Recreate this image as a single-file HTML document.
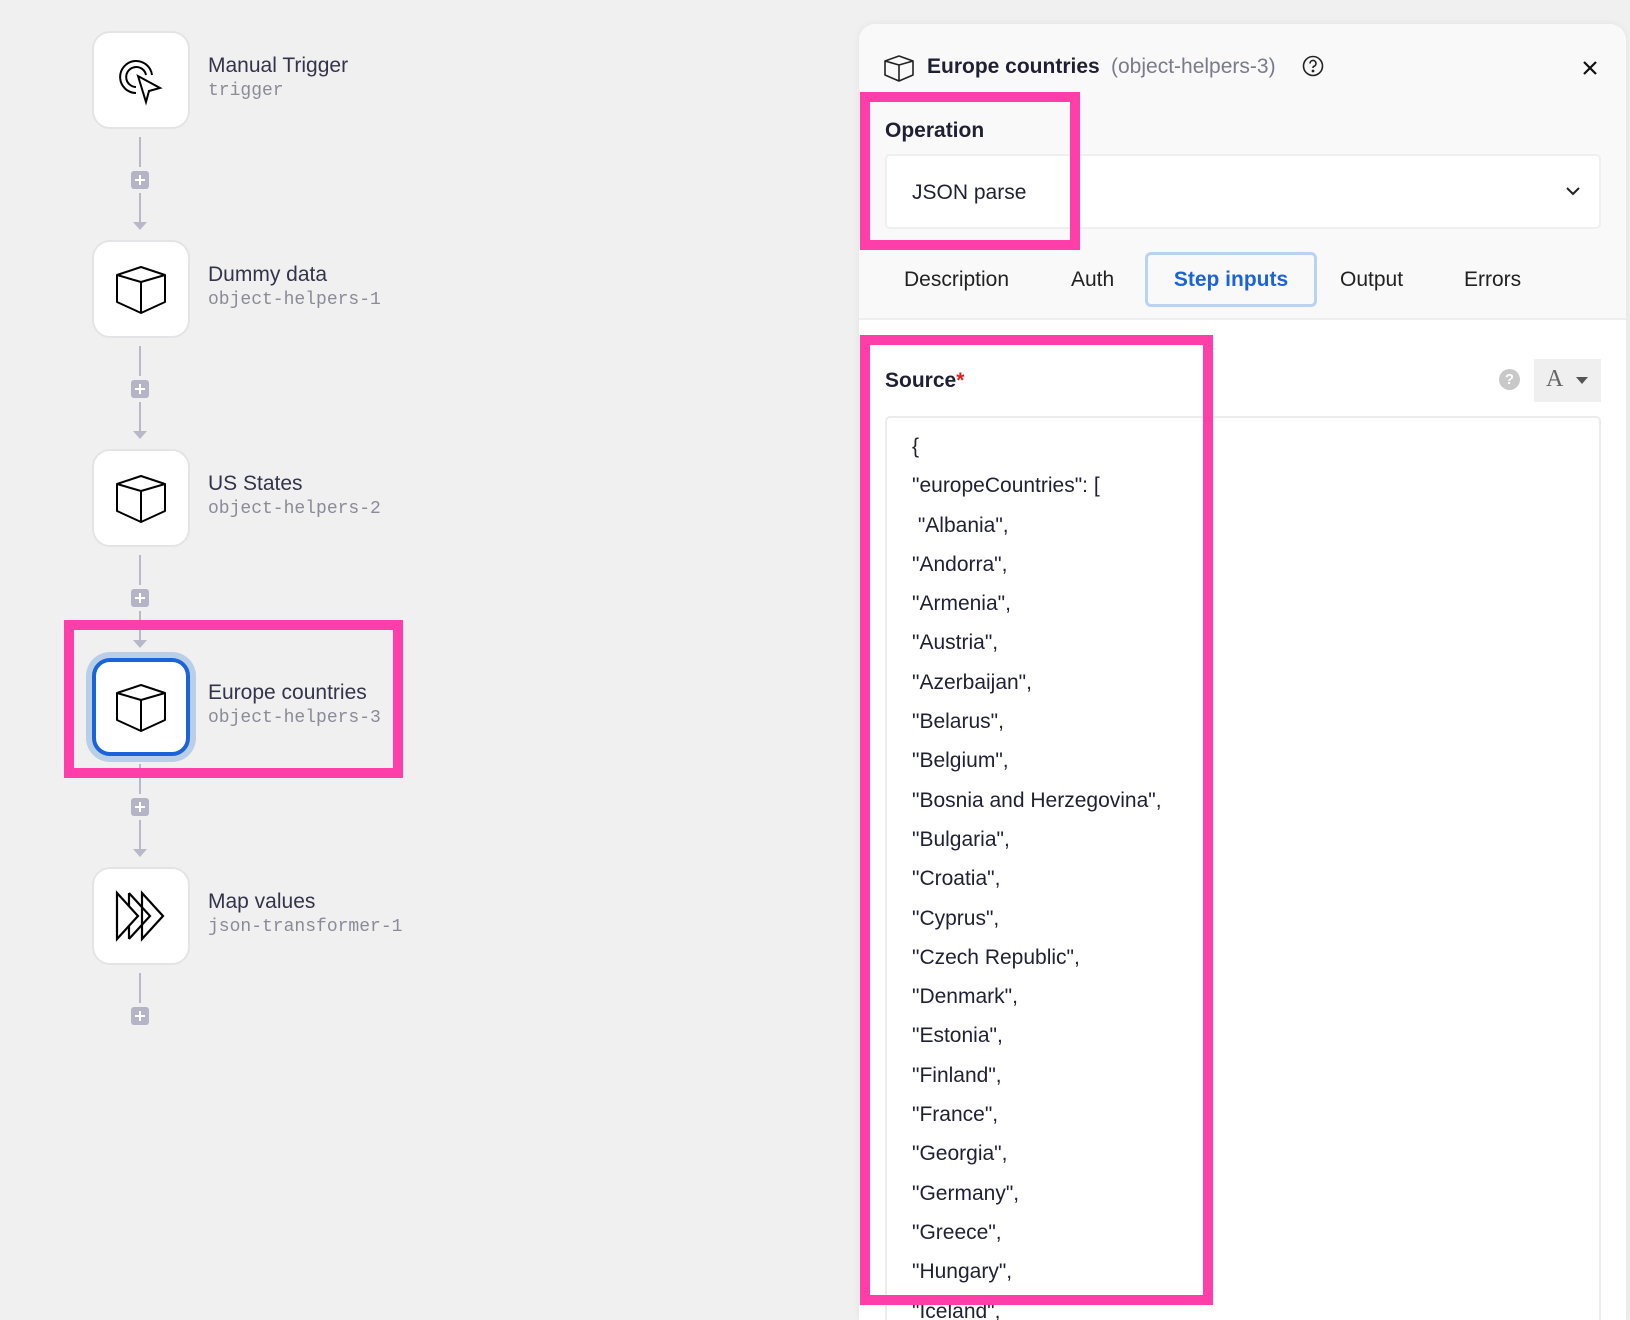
<!DOCTYPE html>
<html><head><meta charset="utf-8"><style>
*{box-sizing:border-box;margin:0;padding:0}
html,body{width:1630px;height:1320px;overflow:hidden}
body{background:#f0f0f0;font-family:"Liberation Sans",sans-serif;position:relative;color:#1f2033}
.node{position:absolute;left:92px;width:98px;height:98px;background:#fff;border:2px solid #e4e4e6;border-radius:18px;display:flex;align-items:center;justify-content:center}
.t{position:absolute;left:208px;font-size:21px;color:#33344a}
.s{position:absolute;left:208px;font-family:"Liberation Mono",monospace;font-size:18px;color:#8a8b97}
.vl{position:absolute;left:139px;width:2px;background:#b8b8c8}
.plus{position:absolute;left:131px;width:18px;height:18px;background:#b4b4c6;border-radius:3px}
.plus:before{content:"";position:absolute;left:4px;top:8px;width:10px;height:2px;background:#fff}
.plus:after{content:"";position:absolute;left:8px;top:4px;width:2px;height:10px;background:#fff}
.arr{position:absolute;left:133px;width:0;height:0;border-left:7px solid transparent;border-right:7px solid transparent;border-top:8px solid #b8b8c8}
.pink{position:absolute;border:10px solid #ff3eaa}
.panel{position:absolute;left:859px;top:24px;width:767px;height:1296px;background:#f9f9f9;border-radius:16px 16px 0 0;box-shadow:0 0 8px rgba(0,0,0,.06);overflow:hidden}
.lines{position:absolute;left:912px;top:427px;font-size:21px;line-height:39.3px;color:#1f2033}
</style></head><body>

<div class="node" style="top:31px"><svg width="54" height="54" viewBox="0 0 54 54" fill="none" stroke="#000" stroke-width="2"><path d="M22 40A16 16 0 1 1 38 22"/><path d="M22 34A10 10 0 1 1 32 22"/><path d="M24 23L32 49L35 38L46 35Z" fill="#fff"/></svg></div>
<div class="t" style="top:54px">Manual Trigger</div><div class="s" style="top:81px">trigger</div>

<div class="node" style="top:240px"><svg width="54" height="54" viewBox="0 0 54 54" fill="none" stroke="#000" stroke-width="2" stroke-linejoin="round"><path d="M3 13L27 5L51 13L27 20Z M3 13V40L27 51L51 40V13 M27 20V51"/></svg></div>
<div class="t" style="top:263px">Dummy data</div><div class="s" style="top:290px">object-helpers-1</div>

<div class="node" style="top:449px"><svg width="54" height="54" viewBox="0 0 54 54" fill="none" stroke="#000" stroke-width="2" stroke-linejoin="round"><path d="M3 13L27 5L51 13L27 20Z M3 13V40L27 51L51 40V13 M27 20V51"/></svg></div>
<div class="t" style="top:472px">US States</div><div class="s" style="top:499px">object-helpers-2</div>

<div class="node" style="top:658px;border:4px solid #1a63d8;box-shadow:0 0 0 6px #b9cfe8"><svg width="54" height="54" viewBox="0 0 54 54" fill="none" stroke="#000" stroke-width="2" stroke-linejoin="round"><path d="M3 13L27 5L51 13L27 20Z M3 13V40L27 51L51 40V13 M27 20V51"/></svg></div>
<div class="t" style="top:681px">Europe countries</div><div class="s" style="top:708px">object-helpers-3</div>

<div class="node" style="top:867px"><svg width="54" height="54" viewBox="0 0 54 54" fill="none" stroke="#000" stroke-width="2.2" stroke-linejoin="miter"><path d="M3 4L24 27L3 50Z"/><path d="M15 4L36 27L15 50"/><path d="M28 4L49 27L28 50Z"/><path d="M15 4V17 M15 37V50"/></svg></div>
<div class="t" style="top:890px">Map values</div><div class="s" style="top:917px">json-transformer-1</div>

<div class="vl" style="top:137px;height:30px"></div><div class="plus" style="top:171px"></div><div class="vl" style="top:193px;height:30px"></div><div class="arr" style="top:222px"></div>
<div class="vl" style="top:346px;height:30px"></div><div class="plus" style="top:380px"></div><div class="vl" style="top:402px;height:30px"></div><div class="arr" style="top:431px"></div>
<div class="vl" style="top:555px;height:30px"></div><div class="plus" style="top:589px"></div><div class="vl" style="top:611px;height:30px"></div><div class="arr" style="top:640px"></div>
<div class="vl" style="top:764px;height:30px"></div><div class="plus" style="top:798px"></div><div class="vl" style="top:820px;height:30px"></div><div class="arr" style="top:849px"></div>
<div class="vl" style="top:973px;height:30px"></div><div class="plus" style="top:1007px"></div>

<div class="pink" style="left:64px;top:620px;width:339px;height:158px"></div>

<div class="panel">
 <div style="position:absolute;left:0;top:294px;width:767px;height:1002px;background:#fff;border-top:2px solid #eeeeee"></div>
 <div style="position:absolute;left:26px;top:392px;width:716px;height:920px;background:#fff;border:2px solid #ececec;border-radius:5px"></div>
</div>
<svg style="position:absolute;left:884px;top:54px" width="30" height="28" viewBox="0 0 30 28" fill="none" stroke="#222" stroke-width="1.6" stroke-linejoin="round"><path d="M1 7L15 2L29 7L15 11Z M1 7V21L15 27L29 21V7 M15 11V27"/></svg>
<div style="position:absolute;left:927px;top:55px;font-size:21px;font-weight:bold;color:#1f2033">Europe countries</div>
<div style="position:absolute;left:1111px;top:55px;font-size:21px;color:#7a7b8a">(object-helpers-3)</div>
<svg style="position:absolute;left:1302px;top:55px" width="22" height="22" viewBox="0 0 22 22" fill="none" stroke="#222" stroke-width="1.6"><circle cx="11" cy="11" r="9.5"/><path d="M8 8.5a3 3 0 1 1 4 2.8c-.8.3-1 .9-1 1.7"/><circle cx="11" cy="16" r=".6" fill="#222"/></svg>
<svg style="position:absolute;left:1582px;top:60px" width="16" height="16" viewBox="0 0 16 16" stroke="#111" stroke-width="2.2"><path d="M2 2L14 14M14 2L2 14"/></svg>

<div style="position:absolute;left:885px;top:119px;font-size:21px;font-weight:bold">Operation</div>
<div style="position:absolute;left:885px;top:154px;width:716px;height:75px;background:#fff;border:2px solid #efefef;border-radius:5px"></div>
<div style="position:absolute;left:912px;top:181px;font-size:21px">JSON parse</div>
<svg style="position:absolute;left:1565px;top:186px" width="16" height="10" viewBox="0 0 16 10" fill="none" stroke="#222" stroke-width="2"><path d="M2 2L8 8L14 2"/></svg>

<div style="position:absolute;left:904px;top:268px;font-size:21px;color:#222">Description</div>
<div style="position:absolute;left:1071px;top:268px;font-size:21px;color:#222">Auth</div>
<div style="position:absolute;left:1145px;top:252px;width:172px;height:55px;border:3px solid #b9d3f0;border-radius:6px"></div>
<div style="position:absolute;left:1145px;top:268px;width:172px;text-align:center;font-size:21px;font-weight:bold;color:#1a63d8">Step inputs</div>
<div style="position:absolute;left:1340px;top:268px;font-size:21px;color:#222">Output</div>
<div style="position:absolute;left:1464px;top:268px;font-size:21px;color:#222">Errors</div>

<div class="pink" style="left:860px;top:92px;width:220px;height:158px"></div>

<div style="position:absolute;left:885px;top:369px;font-size:21px;font-weight:bold">Source<span style="color:#e02020">*</span></div>
<div style="position:absolute;left:1499px;top:369px;width:21px;height:21px;border-radius:50%;background:#c8c8c8;color:#fff;font-size:15px;font-weight:bold;text-align:center;line-height:21px">?</div>
<div style="position:absolute;left:1534px;top:359px;width:67px;height:43px;background:#efefef"></div>
<div style="position:absolute;left:1546px;top:366px;font-family:'Liberation Serif',serif;font-size:24px;color:#666">A</div>
<div style="position:absolute;left:1576px;top:377px;border-left:6px solid transparent;border-right:6px solid transparent;border-top:7px solid #555"></div>

<div class="lines">{<br>"europeCountries": [<br>&nbsp;"Albania",<br>"Andorra",<br>"Armenia",<br>"Austria",<br>"Azerbaijan",<br>"Belarus",<br>"Belgium",<br>"Bosnia and Herzegovina",<br>"Bulgaria",<br>"Croatia",<br>"Cyprus",<br>"Czech Republic",<br>"Denmark",<br>"Estonia",<br>"Finland",<br>"France",<br>"Georgia",<br>"Germany",<br>"Greece",<br>"Hungary",<br>"Iceland",</div>

<div class="pink" style="left:860px;top:335px;width:353px;height:970px"></div>
</body></html>
